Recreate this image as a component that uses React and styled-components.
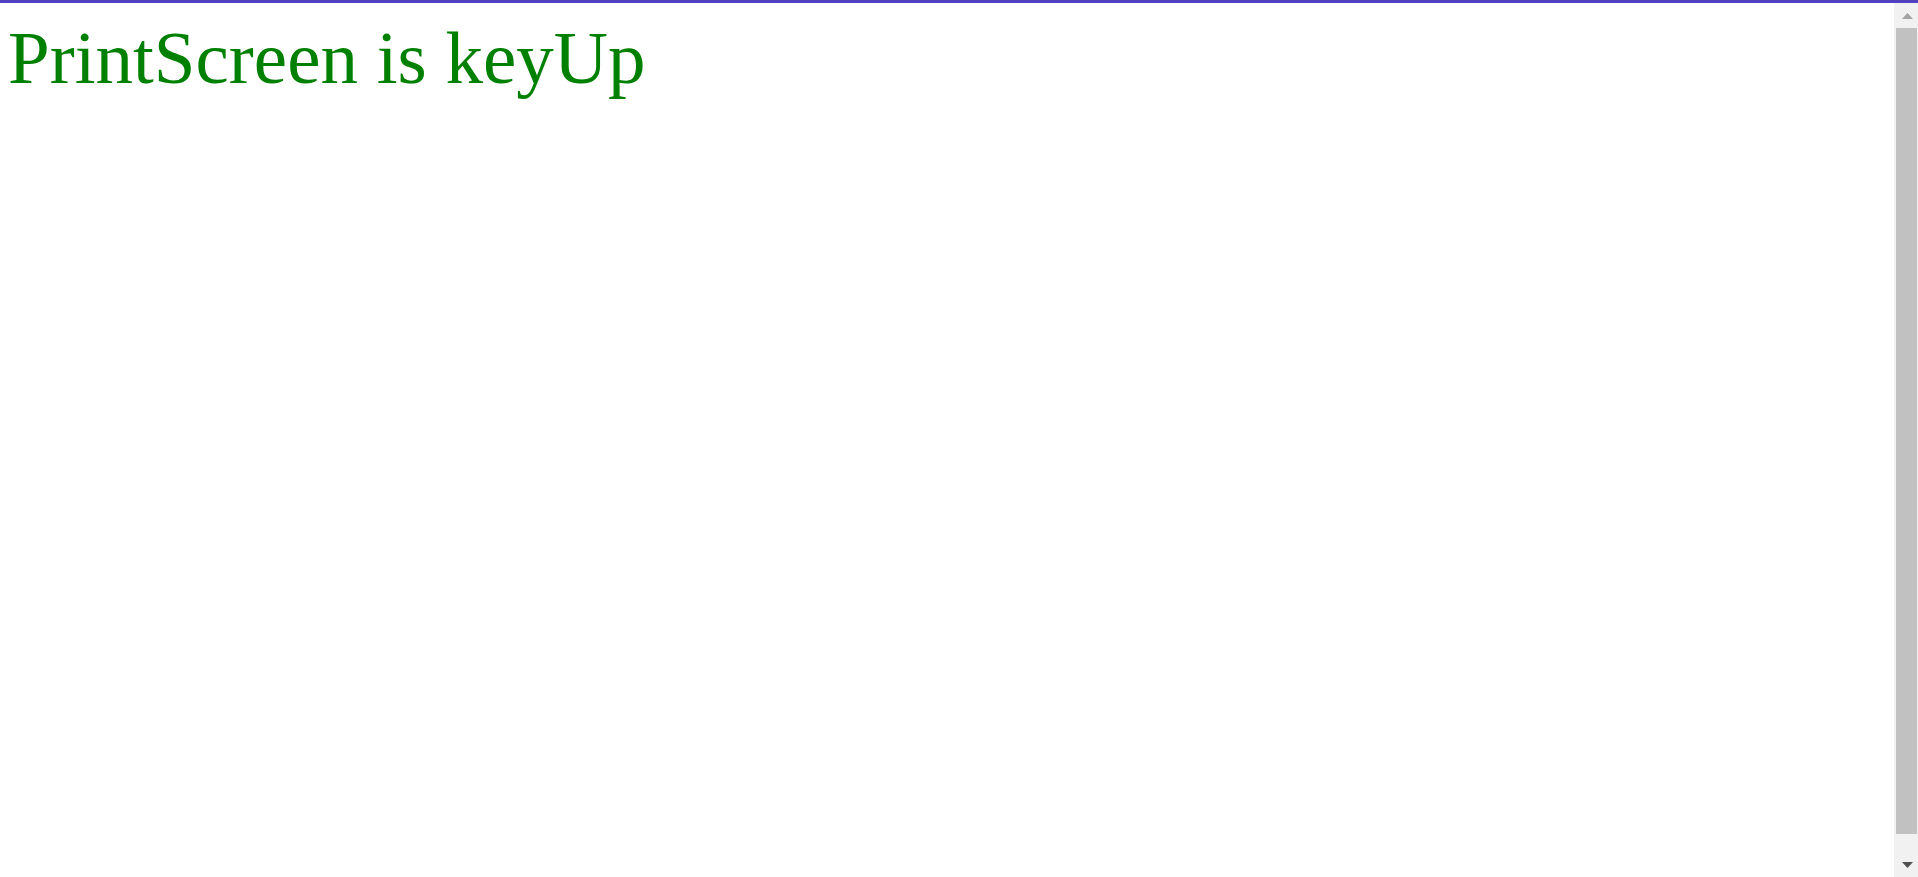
import React from "react";
import styled, { createGlobalStyle } from "styled-components";

const GlobalStyle = createGlobalStyle`
  html, body {
    margin: 0;
    padding: 0;
    height: 100%;
    overflow: hidden;
    background: #ffffff;
  }
  #root {
    height: 100%;
  }
`;

const Frame = styled.div`
  display: flex;
  flex-direction: column;
  height: 100vh;
`;

const TopLine = styled.div`
  flex: 0 0 3px;
  background-color: #5140c0;
`;

const Body = styled.div`
  flex: 1;
  min-height: 0;
  display: flex;
`;

const Page = styled.div`
  flex: 1;
  overflow: hidden;
  padding: 8px;
  font-family: "Liberation Serif", "Times New Roman", serif;
`;

const Status = styled.h1`
  margin: 4px 0 0;
  font-size: 75px;
  font-weight: normal;
  line-height: 1.15;
  color: ${(p) => (p.$up ? "#008000" : "#d00000")};
`;

const ScrollBar = styled.div`
  flex: 0 0 24px;
  display: flex;
  flex-direction: column;
  background-color: #f1f1f1;
`;

const ArrowButton = styled.div`
  flex: 0 0 25px;
  display: flex;
  align-items: center;
  justify-content: center;
  padding-left: 2px;
  svg {
    display: block;
  }
`;

const Track = styled.div`
  flex: 1;
  display: flex;
  flex-direction: column;
  padding: 0 1px 18px 2px;
`;

const Thumb = styled.div`
  flex: 1;
  background-color: #c1c1c1;
`;

const Arrow = ({ up }) => (
  <svg width="11" height="6" viewBox="0 0 11 6">
    <polygon
      points={up ? "0,6 11,6 5.5,0" : "0,0 11,0 5.5,6"}
      fill={up ? "#a3a3a3" : "#505050"}
    />
  </svg>
);

export default function App() {
  return (
    <>
      <GlobalStyle />
      <Frame>
        <TopLine />
        <Body>
          <Page>
            <Status $up>PrintScreen is keyUp</Status>
          </Page>
          <ScrollBar>
            <ArrowButton>
              <Arrow up />
            </ArrowButton>
            <Track>
              <Thumb />
            </Track>
            <ArrowButton>
              <Arrow />
            </ArrowButton>
          </ScrollBar>
        </Body>
      </Frame>
    </>
  );
}
